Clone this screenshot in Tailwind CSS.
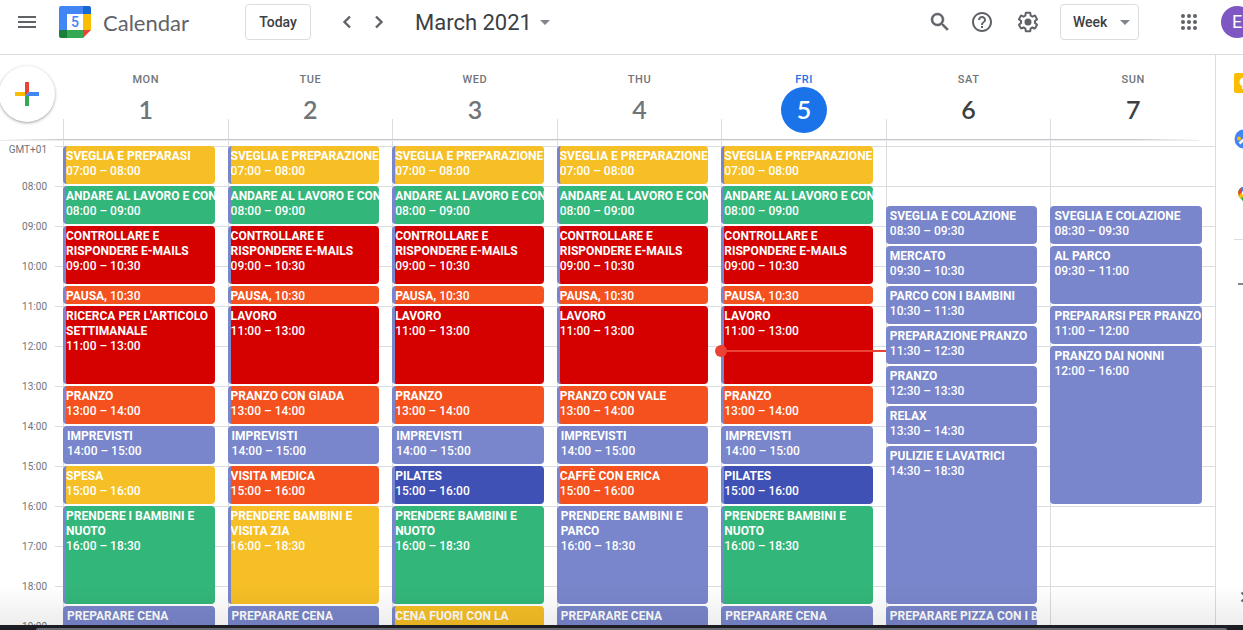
<!DOCTYPE html>
<html lang="en">
<head>
<meta charset="utf-8">
<title>Calendar - March 2021</title>
<script src="https://cdn.jsdelivr.net/npm/@tailwindcss/browser@4"></script>
</head>
<body class="flex h-screen flex-col overflow-hidden bg-white font-['Roboto',sans-serif] text-[#3c4043]">

<header class="flex h-[55px] shrink-0 items-center border-b border-[#dadce0] pb-[10px] pl-[15px]">
  <button aria-label="Main menu" class="flex size-6 shrink-0 items-center justify-center">
    <svg class="size-6" viewBox="0 0 24 24" fill="#5f6368"><path d="M3 18h18v-2H3v2zm0-5h18v-2H3v2zm0-7v2h18V6H3z"/></svg>
  </button>
  <a href="#" class="ml-5 flex shrink-0 items-center gap-3">
    <svg class="size-8" viewBox="0 0 32 32">
      <path d="M2 0h22v8H8v16H0V2a2 2 0 0 1 2-2z" fill="#4285f4"/>
      <path d="M24 0h6a2 2 0 0 1 2 2v6h-8z" fill="#1967d2"/>
      <path d="M24 8h8v16h-8z" fill="#fbbc04"/>
      <path d="M8 24h16v8H8z" fill="#34a853"/>
      <path d="M0 24h8v8H2a2 2 0 0 1-2-2z" fill="#188038"/>
      <path d="M24 24h8l-8 8z" fill="#ea4335"/>
      <path d="M8 8h16v16H8z" fill="#fff"/>
      <text x="16" y="21" text-anchor="middle" font-family="Roboto" font-size="14" font-weight="500" fill="#4285f4">5</text>
    </svg>
    <span class="pt-[2px] font-['Lato',sans-serif] text-[22px] leading-8 text-[#5f6368]">Calendar</span>
  </a>
  <div class="flex flex-1 items-center pl-14">
    <button class="h-9 w-[66px] shrink-0 rounded border border-[#dadce0] text-sm font-medium">Today</button>
    <button aria-label="Previous week" class="ml-6 shrink-0"><svg class="size-6" viewBox="0 0 24 24" fill="none" stroke="#5f6368" stroke-width="2.4"><path d="M15 6.500l-5.500 5.500 5.500 5.500"/></svg></button>
    <button aria-label="Next week" class="ml-2 shrink-0"><svg class="size-6" viewBox="0 0 24 24" fill="none" stroke="#5f6368" stroke-width="2.400"><path d="M9 6.500l5.500 5.500L9 17.500"/></svg></button>
    <button class="ml-6 flex shrink-0 items-center gap-2 text-[22px]">
      <span>March 2021</span>
      <svg class="h-[5px] w-[10px]" viewBox="0 0 10 5"><path d="M0 0h10L5 5z" fill="#80868b"/></svg>
    </button>
  </div>
  <div class="-mr-[10px] flex shrink-0 items-center">
    <button aria-label="Search"><svg class="size-6" viewBox="0 0 24 24" fill="#5f6368" stroke="#5f6368" stroke-width=".5"><path d="M15.500 14h-.79l-.28-.27A6.470 6.470 0 0 0 16 9.500 6.500 6.500 0 1 0 9.500 16c1.610 0 3.090-.59 4.230-1.570l.27.28v.79l5 4.990L20.490 19l-4.990-5zm-6 0C7.010 14 5 11.990 5 9.500S7.010 5 9.500 5 14 7.010 14 9.500 11.990 14 9.500 14z"/></svg></button>
    <button aria-label="Support" class="ml-[18px]"><svg class="size-6" viewBox="0 0 24 24" fill="#5f6368"><path d="M11 18h2v-2h-2v2zm1-16C6.480 2 2 6.480 2 12s4.480 10 10 10 10-4.480 10-10S17.520 2 12 2zm0 18c-4.410 0-8-3.590-8-8s3.590-8 8-8 8 3.590 8 8-3.590 8-8 8zm0-14c-2.210 0-4 1.790-4 4h2c0-1.100.9-2 2-2s2 .9 2 2c0 2-3 1.750-3 5h2c0-2.250 3-2.500 3-5 0-2.210-1.790-4-4-4z"/></svg></button>
    <button aria-label="Settings" class="ml-[22px]"><svg class="size-6" viewBox="0 0 24 24" fill="#5f6368"><path d="M13.850 22.250h-3.700c-.74 0-1.360-.54-1.450-1.270l-.27-1.890c-.27-.14-.53-.29-.79-.46l-1.800.72c-.7.260-1.470-.03-1.810-.65L2.200 15.530c-.35-.66-.2-1.440.36-1.880l1.530-1.190c-.01-.15-.02-.3-.02-.46 0-.15.010-.31.020-.46l-1.520-1.190c-.59-.45-.74-1.260-.37-1.880l1.850-3.190c.34-.62 1.110-.9 1.790-.63l1.810.73c.26-.17.520-.32.780-.46l.27-1.910c.09-.7.710-1.250 1.440-1.250h3.700c.74 0 1.360.54 1.450 1.270l.27 1.890c.27.14.53.29.79.46l1.800-.72c.71-.26 1.480.03 1.820.65l1.840 3.180c.36.66.2 1.440-.36 1.880l-1.520 1.190c.01.15.02.3.02.46s-.01.31-.02.46l1.520 1.190c.56.45.72 1.230.37 1.860l-1.860 3.220c-.34.62-1.110.9-1.800.63l-1.800-.72c-.26.17-.52.32-.78.46l-.27 1.910c-.1.680-.72 1.220-1.460 1.220zm-3.230-2h2.760l.37-2.550.53-.22c.44-.18.88-.44 1.340-.78l.45-.34 2.380.96 1.380-2.400-2.030-1.580.07-.56c.03-.26.06-.51.06-.78s-.03-.53-.06-.78l-.07-.56 2.030-1.580-1.390-2.400-2.390.96-.45-.35c-.42-.32-.87-.58-1.330-.77l-.52-.22-.37-2.550h-2.760l-.37 2.550-.53.21c-.44.19-.88.44-1.340.79l-.45.33-2.380-.95-1.390 2.390 2.030 1.580-.07.56a7 7 0 0 0-.06.79c0 .26.020.53.060.78l.07.56-2.030 1.580 1.380 2.400 2.390-.96.45.35c.43.33.86.58 1.330.77l.53.22.38 2.550z"/><circle cx="12" cy="12" r="3.500"/></svg></button>
    <button class="ml-5 flex h-9 w-[79px] items-center justify-between rounded border border-[#dadce0] pr-2 pl-3 text-sm font-medium">
      <span>Week</span>
      <svg class="h-[5px] w-[10px]" viewBox="0 0 10 5"><path d="M0 0h10L5 5z" fill="#80868b"/></svg>
    </button>
    <button aria-label="Google apps" class="ml-[38px]"><svg class="size-6" viewBox="0 0 24 24" fill="#5f6368"><circle cx="6" cy="6" r="2"/><circle cx="12" cy="6" r="2"/><circle cx="18" cy="6" r="2"/><circle cx="6" cy="12" r="2"/><circle cx="12" cy="12" r="2"/><circle cx="18" cy="12" r="2"/><circle cx="6" cy="18" r="2"/><circle cx="12" cy="18" r="2"/><circle cx="18" cy="18" r="2"/></svg></button>
    <button aria-label="Account" class="ml-5 size-8 rounded-full bg-[#7e57c2] text-lg text-white">E</button>
  </div>
</header>

<div class="relative flex min-h-0 flex-1">
  <main class="flex min-w-0 flex-1 flex-col">
    <div class="flex h-[84px] shrink-0">
      <div class="w-[63px] shrink-0 pt-[11px]">
        <button aria-label="Create" class="-ml-px flex size-14 items-center justify-center rounded-full bg-white shadow-[0_1px_2px_0_rgba(60,64,67,0.3),0_1px_3px_1px_rgba(60,64,67,0.15)]">
          <svg class="size-6" viewBox="0 0 24 24"><path d="M10 0h4v10l-4 4z" fill="#ea4335"/><path d="M0 10h10v4H0z" fill="#fbbc04"/><path d="M14 10h10v4H10z" fill="#4285f4"/><path d="M10 14h4v10h-4z" fill="#34a853"/></svg>
        </button>
      </div>
      <div id="days" class="grid flex-1 grid-cols-7"></div>
    </div>
    <div class="flex h-[2px] shrink-0 flex-col">
      <div class="flex h-px"><div class="w-16 bg-linear-to-r from-transparent to-[#c4c6c9]"></div><div class="flex-1 bg-[#c4c6c9]"></div><div class="mr-4 w-16 bg-linear-to-r from-[#c4c6c9] to-transparent"></div></div>
      <div class="mr-4 h-px bg-[#ececee]"></div>
    </div>
    <div class="grid min-h-0 flex-1 overflow-hidden">
      <div id="hours" class="col-start-1 row-start-1 pt-[5px]"></div>
      <div id="week" class="col-start-1 row-start-1 ml-[63px] grid grid-cols-7"></div>
    </div>
  </main>

  <aside class="w-7 shrink-0 overflow-hidden border-l border-[#dadce0]">
    <div class="flex h-full w-14 flex-col items-center pt-[18px] pb-4">
      <button aria-label="Keep"><svg class="size-5" viewBox="0 0 20 20"><rect width="20" height="20" rx="2" fill="#fbbc04"/><circle cx="10" cy="9" r="4.500" fill="#fff"/><path d="M8 13.500h4V16H8z" fill="#fff"/></svg></button>
      <button aria-label="Tasks" class="mt-9"><svg class="size-5" viewBox="0 0 20 20"><circle cx="10" cy="10" r="9.500" fill="#4285f4"/><path d="M5.500 14.500l3-3L11 14l7-7" fill="none" stroke="#fff" stroke-width="2.500"/><circle cx="5" cy="9.500" r="2" fill="#fbbc04"/></svg></button>
      <button aria-label="Maps" class="mt-9"><svg class="size-5" viewBox="0 0 20 20"><path d="M4 8a6 6 0 0 1 12 0c0 5-5 6-6 11-1-5-6-6-6-11z" fill="#34a853"/><path d="M4 8l6-2v4l-3 4C5 12 4 10 4 8z" fill="#fbbc04"/><path d="M5.400 4.200A6 6 0 0 1 10 2v4l-5 4C4 9 4 6 5.400 4.200z" fill="#ea4335"/><path d="M7 2.800A6 6 0 0 1 16 8l-7 1z" fill="#4285f4"/><circle cx="10" cy="8" r="2.200" fill="#fff"/></svg></button>
      <hr class="mt-[34px] w-5 border-[#dadce0]">
      <button aria-label="Get add-ons" class="mt-[38px]"><svg class="size-3" viewBox="0 0 12 12" fill="#80868b"><path d="M5 0h2v5h5v2H7v5H5V7H0V5h5z"/></svg></button>
      <button aria-label="Hide side panel" class="mt-auto"><svg class="size-6" viewBox="0 0 24 24" fill="none" stroke="#5f6368" stroke-width="2"><path d="M9.500 7.500l4.500 4.500-4.500 4.500"/></svg></button>
    </div>
  </aside>

  <div class="pointer-events-none absolute inset-x-0 bottom-0 h-10 bg-linear-to-b from-transparent to-black/7"></div>
</div>

<footer class="flex h-[5px] shrink-0 flex-col justify-end bg-[#1c1e23]">
  <div class="mr-4 ml-9 h-[2px] rounded-t-sm bg-[#686d76]"></div>
</footer>

<script>
const FIRST_HOUR = 7;
const NOW = 12.125;
const tones = {
  yellow: 'bg-[#f6bf26] border-l-3 border-[#7986cb]',
  green: 'bg-[#33b679] border-l-3 border-[#7986cb]',
  red: 'bg-[#d50000] border-l-3 border-[#7986cb]',
  orange: 'bg-[#f4511e] border-l-3 border-[#7986cb]',
  blue: 'bg-[#3f51b5] border-l-3 border-[#7986cb]',
  indigo: 'bg-[#7986cb] pl-1',
};
const wake = [7, 8, 'yellow', 'SVEGLIA E PREPARAZIONE'];
const go = [8, 9, 'green', 'ANDARE AL LAVORO E CON'];
const mail = [9, 10.5, 'red', 'CONTROLLARE E RISPONDERE E-MAILS', 'wrap'];
const pause = [10.5, 11, 'orange', 'PAUSA'];
const work = [11, 13, 'red', 'LAVORO'];
const spare = [14, 15, 'indigo', 'IMPREVISTI'];
const dinner = [18.5, 19.5, 'indigo', 'PREPARARE CENA'];
const days = [
  ['MON', 1, [[7, 8, 'yellow', 'SVEGLIA E PREPARASI'], go, mail, pause, [11, 13, 'red', "RICERCA PER L'ARTICOLO SETTIMANALE", 'wrap'], [13, 14, 'orange', 'PRANZO'], spare, [15, 16, 'yellow', 'SPESA'], [16, 18.5, 'green', 'PRENDERE I BAMBINI E NUOTO', 'wrap'], dinner]],
  ['TUE', 2, [wake, go, mail, pause, work, [13, 14, 'orange', 'PRANZO CON GIADA'], spare, [15, 16, 'orange', 'VISITA MEDICA'], [16, 18.5, 'yellow', 'PRENDERE BAMBINI E VISITA ZIA', 'wrap'], dinner]],
  ['WED', 3, [wake, go, mail, pause, work, [13, 14, 'orange', 'PRANZO'], spare, [15, 16, 'blue', 'PILATES'], [16, 18.5, 'green', 'PRENDERE BAMBINI E NUOTO', 'wrap'], [18.5, 19.5, 'yellow', 'CENA FUORI CON LA']]],
  ['THU', 4, [wake, go, mail, pause, work, [13, 14, 'orange', 'PRANZO CON VALE'], spare, [15, 16, 'orange', 'CAFFÈ CON ERICA'], [16, 18.5, 'indigo', 'PRENDERE BAMBINI E PARCO', 'wrap'], dinner]],
  ['FRI', 5, [wake, go, mail, pause, work, [13, 14, 'orange', 'PRANZO'], spare, [15, 16, 'blue', 'PILATES'], [16, 18.5, 'green', 'PRENDERE BAMBINI E NUOTO', 'wrap'], dinner]],
  ['SAT', 6, [[8.5, 9.5, 'indigo', 'SVEGLIA E COLAZIONE'], [9.5, 10.5, 'indigo', 'MERCATO'], [10.5, 11.5, 'indigo', 'PARCO CON I BAMBINI'], [11.5, 12.5, 'indigo', 'PREPARAZIONE PRANZO'], [12.5, 13.5, 'indigo', 'PRANZO'], [13.5, 14.5, 'indigo', 'RELAX'], [14.5, 18.5, 'indigo', 'PULIZIE E LAVATRICI'], [18.5, 19.5, 'indigo', 'PREPARARE PIZZA CON I B']]],
  ['SUN', 7, [[8.5, 9.5, 'indigo', 'SVEGLIA E COLAZIONE'], [9.5, 11, 'indigo', 'AL PARCO'], [11, 12, 'indigo', 'PREPARARSI PER PRANZO'], [12, 16, 'indigo', 'PRANZO DAI NONNI']]],
];
const clock = t => String(Math.floor(t)).padStart(2, '0') + ':' + (t % 1 ? '30' : '00');
const row = t => (t - FIRST_HOUR) * 2 + 1;

document.getElementById('days').innerHTML = days.map(([name, num]) => {
  const today = name === 'FRI';
  const label = today ? 'text-[#1a73e8]' : 'text-[#70757a]';
  const circle = today ? 'bg-[#1a73e8] text-white' : num > 5 ? 'text-[#3c4043]' : 'text-[#70757a]';
  return `<div class="relative flex flex-col items-center pt-4 pl-px">
    <div class="pt-px text-[11px] leading-[15px] font-medium tracking-wider ${label}">${name}</div>
    <div class="flex size-[46px] items-center justify-center rounded-full font-['Lato',sans-serif] text-[25px] font-semibold ${circle}">${num}</div>
    <div class="absolute bottom-0 left-0 h-5 border-l border-[#dadce0]"></div>
  </div>`;
}).join('');

document.getElementById('hours').innerHTML = Array.from({ length: 13 }, (_, i) => {
  const text = i ? clock(FIRST_HOUR + i) : 'GMT+01';
  const shift = i ? '-mt-[7px]' : '-mt-1';
  return `<div class="flex h-10 text-[10px] leading-4 text-[#70757a]">
    <div class="w-[47px] shrink-0 text-right ${shift}">${text}</div>
    <div class="ml-2 flex-1 border-t border-[#dadce0]"></div>
  </div>`;
}).join('');

document.getElementById('week').innerHTML = days.map(([name, , events]) => {
  const cards = events.map(([from, to, tone, title, wrap]) => {
    const time = to - from < 1 ? `<span class="font-bold">${title},</span> ${clock(from)}`
      : `<div class="font-bold ${wrap ? '' : 'whitespace-nowrap'}">${title}</div><div>${clock(from)} – ${clock(to)}</div>`;
    return `<div class="mr-[13px] mb-[2px] -ml-px overflow-hidden rounded pt-[3px] text-xs leading-[15px] font-medium text-white ${tones[tone]}" style="grid-row:${row(from)}/${row(to)}">${time}</div>`;
  }).join('');
  const now = name === 'FRI' ? `<div class="absolute right-0 -left-px h-[2px] bg-[#ea4335]" style="top:${(NOW - FIRST_HOUR) * 40 + 4}px"><div class="absolute -top-[5px] -left-[6px] size-3 rounded-full bg-[#ea4335]"></div></div>` : '';
  return `<div class="relative grid min-w-0 auto-rows-[20px] grid-cols-[minmax(0,1fr)] content-start border-l border-[#dadce0] pt-[5px]">${cards}${now}</div>`;
}).join('');
</script>
</body>
</html>
